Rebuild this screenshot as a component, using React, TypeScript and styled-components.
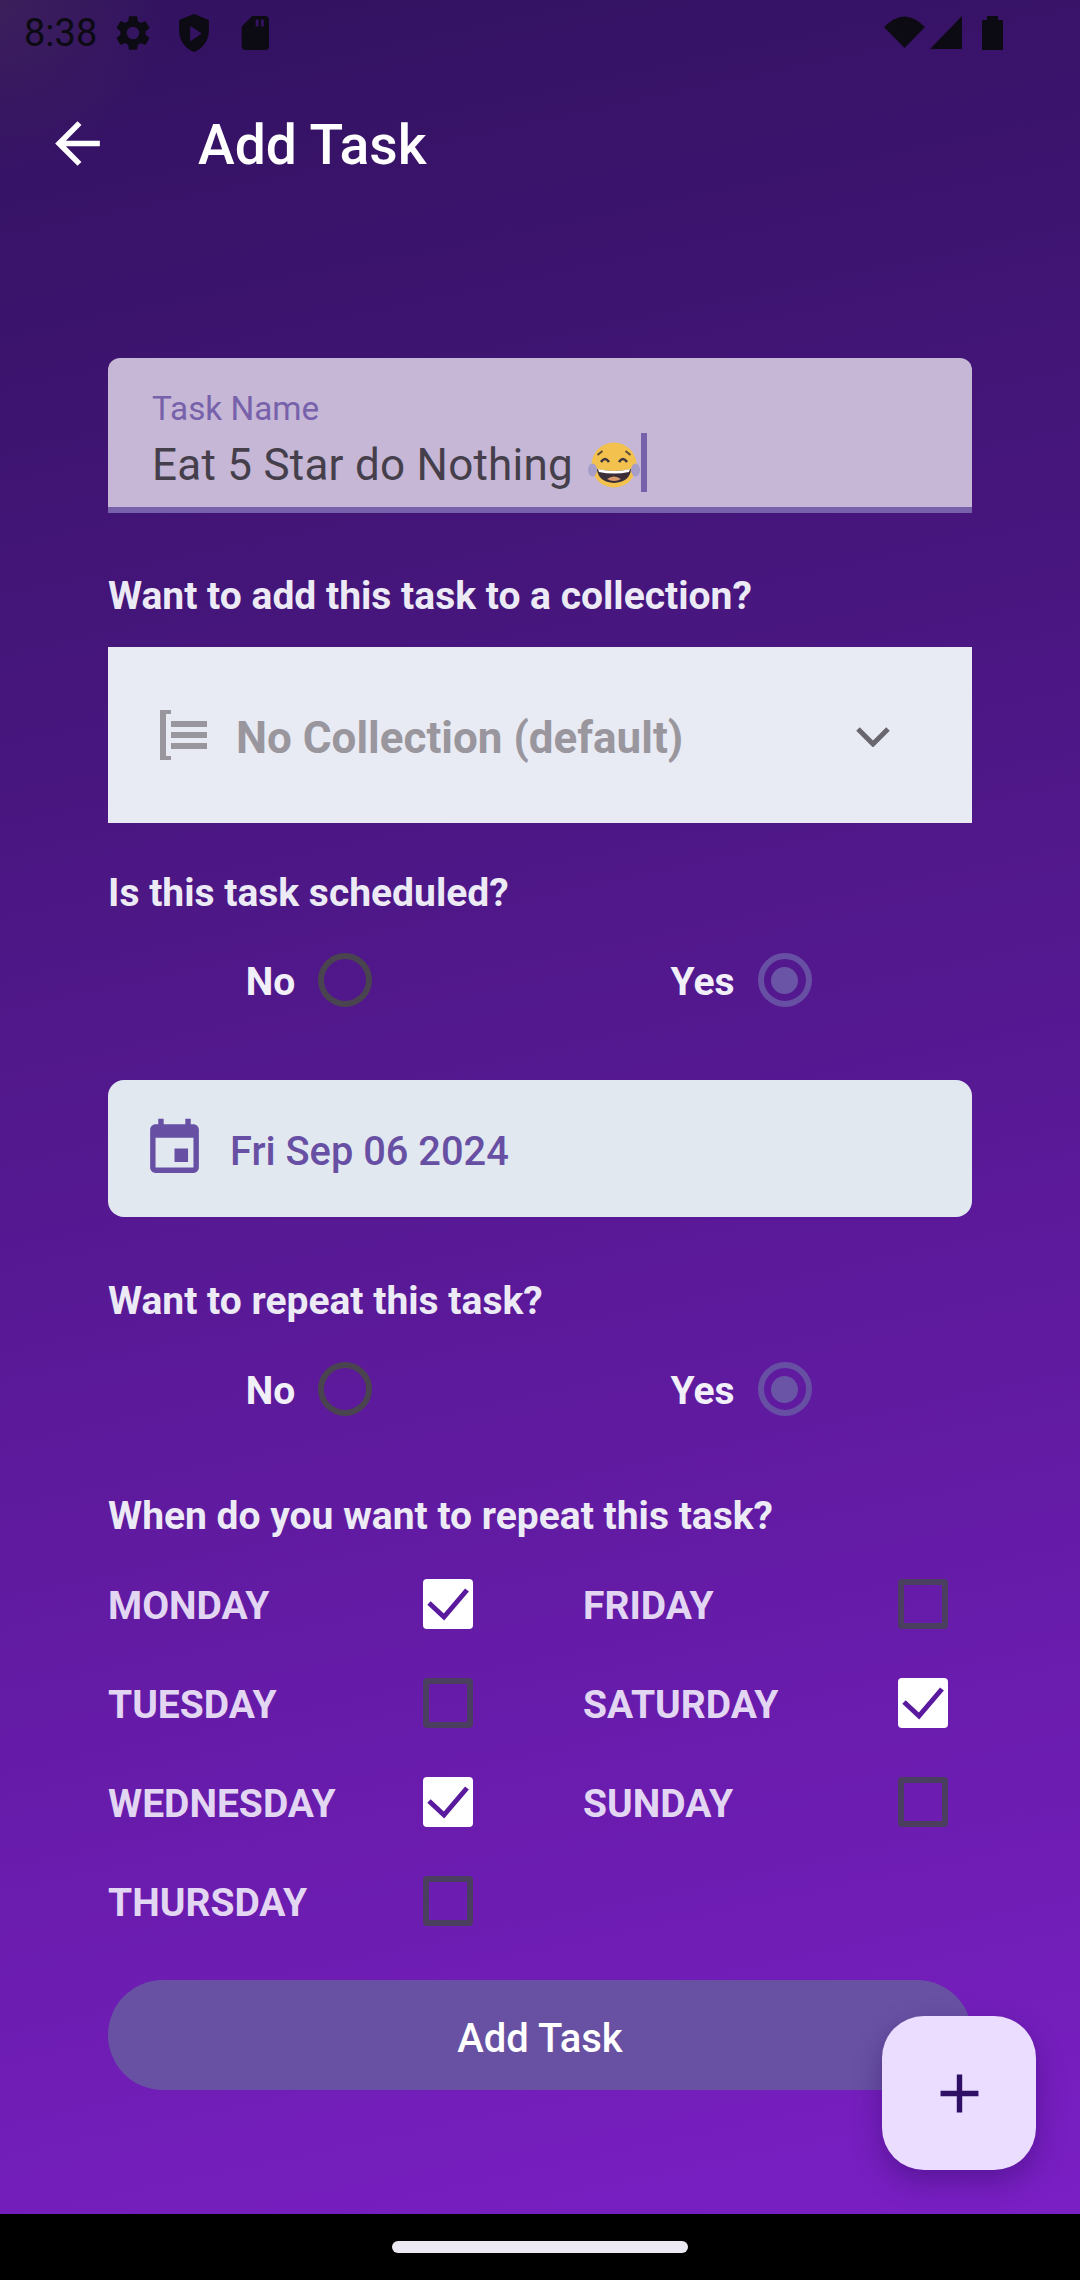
import React from 'react';
import styled, { createGlobalStyle } from 'styled-components';

const GlobalStyle = createGlobalStyle`
  html, body {
    margin: 0;
    padding: 0;
    background: #000;
  }
  * {
    box-sizing: border-box;
  }
`;

const Page = styled.div`
  width: 1080px;
  height: 2280px;
  display: flex;
  flex-direction: column;
  overflow: hidden;
  font-family: Roboto, "Noto Sans", sans-serif;
`;

const Screen = styled.div`
  position: relative;
  flex: 1;
  display: flex;
  flex-direction: column;
  background:
    radial-gradient(circle at 0 0, rgba(110, 100, 70, 0.16), rgba(110, 100, 70, 0) 170px),
    linear-gradient(168deg, #31125f 0%, #7a1fc4 100%);
`;

const StatusBar = styled.div`
  height: 66px;
  display: flex;
  align-items: center;
  padding: 0 66px 0 24px;
  color: #0c0a12;
`;

const Time = styled.span`
  font-size: 38px;
  line-height: 42px;
  margin-right: 15px;
`;

const LeftIcons = styled.div`
  display: flex;
  gap: 19px;
`;

const RightIcons = styled.div`
  display: flex;
  gap: 4px;
  margin-left: auto;
`;

const SignalGroup = styled.div`
  display: flex;
`;

const AppBar = styled.header`
  height: 155px;
  display: flex;
  align-items: center;
  gap: 87px;
  padding-left: 44px;
  color: #fff;
`;

const Title = styled.h1`
  margin: 0;
  padding-top: 5px;
  font-size: 55.3px;
  font-weight: 500;
  line-height: 64px;
`;

const Form = styled.main`
  display: flex;
  flex-direction: column;
  padding: 137px 108px 0;
`;

const NameField = styled.div`
  height: 155px;
  display: flex;
  flex-direction: column;
  padding: 33px 44px 0;
  background: #c5b7d5;
  border-radius: 12px 12px 0 0;
  border-bottom: 6px solid #7761ab;
`;

const FieldLabel = styled.span`
  font-size: 33.3px;
  line-height: 36px;
  color: #7761ab;
`;

const FieldValue = styled.div`
  height: 63px;
  margin-top: 4px;
  display: flex;
  align-items: center;
  font-size: 44px;
  letter-spacing: 0.25px;
  color: #453f4c;
`;

const ValueText = styled.span`
  padding-top: 5px;
`;

const Emoji = styled.svg`
  margin: 4px 0 0 15px;
  flex-shrink: 0;
`;

const Cursor = styled.span`
  width: 6px;
  height: 59px;
  margin-left: 1px;
  background: #7761ab;
`;

const SectionLabel = styled.div<{ $top: number; $bottom: number }>`
  margin: ${p => p.$top}px 0 ${p => p.$bottom}px;
  font-size: 39px;
  line-height: 48px;
  font-weight: 700;
  color: #ecebf5;
`;

const SelectBox = styled.div`
  height: 176px;
  display: flex;
  align-items: center;
  gap: 28px;
  padding: 0 82px 0 52px;
  background: #e8ebf3;
  color: #9a969e;
`;

const SelectText = styled.span`
  flex: 1;
  padding-top: 6px;
  font-size: 44px;
  font-weight: 700;
`;

const ChevronIcon = styled.svg`
  margin-top: 4px;
`;

const RadioRow = styled.div`
  display: grid;
  grid-template-columns: 1fr 1fr;
`;

const RadioItem = styled.label`
  display: flex;
  align-items: center;
  justify-content: center;
  gap: 23px;
  padding-right: 30px;
  font-size: 39px;
  font-weight: 700;
  color: #f1eff8;
`;

const RadioLabel = styled.span`
  padding-top: 3px;
`;

const RadioCircle = styled.span<{ $selected?: boolean }>`
  width: 54px;
  height: 54px;
  display: flex;
  align-items: center;
  justify-content: center;
  border-radius: 50%;
  border: 6px solid ${p => (p.$selected ? '#6750a4' : '#49444f')};

  &::after {
    content: '';
    display: ${p => (p.$selected ? 'block' : 'none')};
    width: 27px;
    height: 27px;
    border-radius: 50%;
    background: #6a54a6;
  }
`;

const DateBox = styled.div`
  height: 137px;
  margin-top: 73px;
  display: flex;
  align-items: center;
  gap: 23px;
  padding-left: 34px;
  border-radius: 16px;
  background: #e2e8f0;
  color: #6750a4;
`;

const DateText = styled.span`
  padding-top: 6px;
  font-size: 39.8px;
  font-weight: 500;
`;

const DaysGrid = styled.div`
  display: grid;
  grid-template-columns: 365px 365px;
  grid-template-rows: repeat(4, 50px);
  grid-auto-flow: column;
  column-gap: 110px;
  row-gap: 49px;
`;

const DayRow = styled.label`
  display: flex;
  align-items: center;
  justify-content: space-between;
  font-size: 39px;
  font-weight: 700;
  color: #e2d6f2;
`;

const DayName = styled.span`
  padding-top: 3px;
`;

const CheckBox = styled.span<{ $checked?: boolean }>`
  width: 50px;
  height: 50px;
  display: flex;
  border-radius: 4px;
  background: ${p => (p.$checked ? '#fff' : 'transparent')};
  border: ${p => (p.$checked ? 'none' : '6px solid #4a3f5f')};
`;

const SubmitButton = styled.button`
  height: 110px;
  margin-top: 54px;
  padding: 6px 0 0;
  border: none;
  border-radius: 55px;
  background: #6851a3;
  color: #fff;
  font-family: inherit;
  font-size: 40px;
  font-weight: 500;
`;

const Fab = styled.button`
  position: absolute;
  right: 44px;
  bottom: 44px;
  width: 154px;
  height: 154px;
  display: flex;
  align-items: center;
  justify-content: center;
  padding: 0;
  border: none;
  border-radius: 42px;
  background: #eaddff;
  color: #2f0f66;
  box-shadow: 0 12px 28px rgba(45, 10, 95, 0.4);
`;

const NavBar = styled.div`
  height: 66px;
  display: flex;
  justify-content: center;
  padding-top: 27px;
  background: #000;
`;

const HomePill = styled.div`
  width: 296px;
  height: 12px;
  border-radius: 6px;
  background: #ece9f2;
`;

const MaterialIcon = ({ d, size }: { d: string; size: number }) => (
  <svg width={size} height={size} viewBox="0 0 24 24" fill="currentColor">
    <path d={d} />
  </svg>
);

const GEAR =
  'M19.14 12.94c.04-.3.06-.61.06-.94 0-.32-.02-.64-.07-.94l2.03-1.58a.49.49 0 0 0 .12-.61l-1.92-3.32a.49.49 0 0 0-.59-.22l-2.39.96c-.5-.38-1.03-.7-1.62-.94l-.36-2.54a.48.48 0 0 0-.48-.41h-3.84c-.24 0-.43.17-.47.41l-.36 2.54c-.59.24-1.13.57-1.62.94l-2.39-.96c-.22-.08-.47 0-.59.22L2.74 8.87c-.12.21-.08.47.12.61l2.03 1.58c-.05.3-.09.63-.09.94s.02.64.07.94l-2.03 1.58a.49.49 0 0 0-.12.61l1.92 3.32c.12.22.37.29.59.22l2.39-.96c.5.38 1.03.7 1.62.94l.36 2.54c.05.24.24.41.48.41h3.84c.24 0 .44-.17.47-.41l.36-2.54c.59-.24 1.13-.56 1.62-.94l2.39.96c.22.08.47 0 .59-.22l1.92-3.32c.12-.22.07-.47-.12-.61l-2.01-1.58zM12 15.6A3.6 3.6 0 1 1 12 8.4a3.6 3.6 0 0 1 0 7.2z';
const SHIELD =
  'M12 1.2 3.5 4.6v6.2c0 5.4 3.6 10.2 8.5 12 4.9-1.8 8.5-6.6 8.5-12V4.6L12 1.2zm-2.2 15.6V7.8l6.6 4.5-6.6 4.5z';
const SD_CARD = 'M18 2.3h-7.6L4.4 8.3v11.4c0 1.1.9 2 2 2H18c1.1 0 2-.9 2-2V4.3c0-1.1-.9-2-2-2zm-4 6h-1.6v-4H14v4zm3 0h-1.6v-4H17v4z';
const EVENT =
  'M17 12h-5v5h5v-5zM16 1v2H8V1H6v2H5c-1.11 0-1.99.9-1.99 2L3 19c0 1.1.89 2 2 2h14c1.1 0 2-.9 2-2V5c0-1.1-.9-2-2-2h-1V1h-2zm3 18H5V8h14v11z';
const ARROW_BACK = 'M20 11H7.83l5.59-5.59L12 4l-8 8 8 8 1.41-1.41L7.83 13H20v-2z';
const ADD = 'M19 13h-6v6h-2v-6H5v-2h6V5h2v6h6v2z';

const LaughEmoji = () => (
  <Emoji width="52" height="46" viewBox="0 0 52 46">
    <circle cx="26" cy="23" r="22.5" fill="#f2c14e" />
    <ellipse cx="4.5" cy="28" rx="4.5" ry="6.5" fill="#a79fc9" />
    <ellipse cx="47.5" cy="28" rx="4.5" ry="6.5" fill="#a79fc9" />
    <path d="M13 20q4-6 8 0M31 20q4-6 8 0" fill="none" stroke="#3c3540" strokeWidth="2.6" />
    <path d="M9.500 13l5-4M42.500 13l-5-4" fill="none" stroke="#5b4a3a" strokeWidth="2" />
    <path d="M9 27q17 4 34 0q-1 13-17 14q-16-1-17-14z" fill="#3a2f38" />
    <path d="M10 27q16 4 32 0l-1 3q-15 3-30 0z" fill="#fff" />
    <path d="M19 37q7-5 14 0q-7 4-14 0z" fill="#d99a6c" />
  </Emoji>
);

const CollectionIcon = () => (
  <svg width="48" height="50" viewBox="0 0 48 50" fill="currentColor">
    <path d="M0 0h11v4H6v42h5v4H0z" />
    <rect x="11" y="11" width="36" height="6" />
    <rect x="11" y="22" width="36" height="6" />
    <rect x="11" y="33" width="36" height="6" />
  </svg>
);

const Chevron = () => (
  <ChevronIcon width="34" height="20" viewBox="0 0 34 20" fill="none" stroke="#69666e" strokeWidth="5">
    <path d="M2 2l15 15L32 2" />
  </ChevronIcon>
);

const CheckMark = () => (
  <svg width="50" height="50" viewBox="0 0 50 50" fill="none" stroke="#5a1a9e" strokeWidth="5">
    <path d="M6 24l15 14L44 11" />
  </svg>
);

const RadioGroup = () => (
  <RadioRow>
    <RadioItem>
      <RadioLabel>No</RadioLabel>
      <RadioCircle />
    </RadioItem>
    <RadioItem>
      <RadioLabel>Yes</RadioLabel>
      <RadioCircle $selected />
    </RadioItem>
  </RadioRow>
);

const days = [
  { name: 'MONDAY', checked: true },
  { name: 'TUESDAY', checked: false },
  { name: 'WEDNESDAY', checked: true },
  { name: 'THURSDAY', checked: false },
  { name: 'FRIDAY', checked: false },
  { name: 'SATURDAY', checked: true },
  { name: 'SUNDAY', checked: false },
];

const App = () => {
  return (
    <Page>
      <GlobalStyle />
      <Screen>
        <StatusBar>
          <Time>8:38</Time>
          <LeftIcons>
            <MaterialIcon d={GEAR} size={42} />
            <MaterialIcon d={SHIELD} size={42} />
            <MaterialIcon d={SD_CARD} size={42} />
          </LeftIcons>
          <RightIcons>
            <SignalGroup>
              <svg width="42" height="42" viewBox="0 0 42 42" fill="currentColor">
                <path d="M0 15Q20.5-6 41 15L20.5 36z" />
              </svg>
              <svg width="42" height="42" viewBox="0 0 42 42" fill="currentColor">
                <path d="M4 37 36 4v33z" />
              </svg>
            </SignalGroup>
            <svg width="42" height="42" viewBox="0 0 42 42" fill="currentColor">
              <path d="M15 4h11v4h5v30H10V8h5z" />
            </svg>
          </RightIcons>
        </StatusBar>

        <AppBar>
          <MaterialIcon d={ARROW_BACK} size={67} />
          <Title>Add Task</Title>
        </AppBar>

        <Form>
          <NameField>
            <FieldLabel>Task Name</FieldLabel>
            <FieldValue>
              <ValueText>Eat 5 Star do Nothing</ValueText>
              <LaughEmoji />
              <Cursor />
            </FieldValue>
          </NameField>

          <SectionLabel $top={59} $bottom={27}>Want to add this task to a collection?</SectionLabel>
          <SelectBox>
            <CollectionIcon />
            <SelectText>No Collection (default)</SelectText>
            <Chevron />
          </SelectBox>

          <SectionLabel $top={46} $bottom={36}>Is this task scheduled?</SectionLabel>
          <RadioGroup />

          <DateBox>
            <MaterialIcon d={EVENT} size={65} />
            <DateText>Fri Sep 06 2024</DateText>
          </DateBox>

          <SectionLabel $top={60} $bottom={37}>Want to repeat this task?</SectionLabel>
          <RadioGroup />

          <SectionLabel $top={76} $bottom={39}>When do you want to repeat this task?</SectionLabel>
          <DaysGrid>
            {days.map(day => (
              <DayRow key={day.name}>
                <DayName>{day.name}</DayName>
                <CheckBox $checked={day.checked}>{day.checked && <CheckMark />}</CheckBox>
              </DayRow>
            ))}
          </DaysGrid>

          <SubmitButton>Add Task</SubmitButton>
        </Form>

        <Fab>
          <MaterialIcon d={ADD} size={65} />
        </Fab>
      </Screen>
      <NavBar>
        <HomePill />
      </NavBar>
    </Page>
  );
};

export default App;
